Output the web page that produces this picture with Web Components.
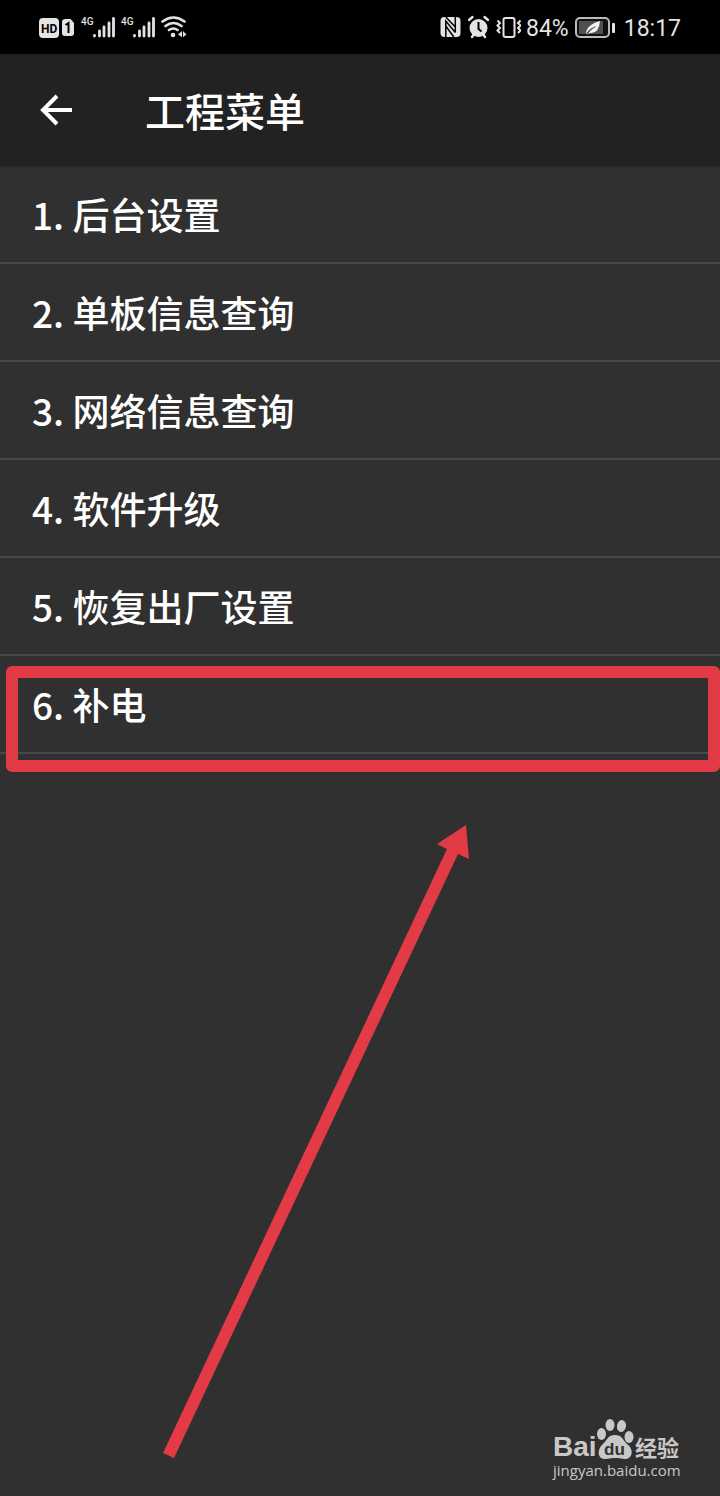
<!DOCTYPE html>
<html lang="zh-CN">
<head>
<meta charset="utf-8">
<meta name="viewport" content="width=device-width, initial-scale=1">
<title>工程菜单</title>
<style>
html, body { margin: 0; background: #303030; }
body { font-family: "Noto Sans CJK SC", sans-serif; color: #fff; }
</style>
</head>
<body>
<menu-screen>
  <status-bar slot="status"></status-bar>
  <title-bar slot="header">工程菜单</title-bar>
  <menu-row>1. 后台设置</menu-row>
  <menu-row>2. 单板信息查询</menu-row>
  <menu-row>3. 网络信息查询</menu-row>
  <menu-row>4. 软件升级</menu-row>
  <menu-row>5. 恢复出厂设置</menu-row>
  <menu-row marked>6. 补电</menu-row>
  <pointer-arrow slot="note"></pointer-arrow>
  <site-mark slot="footer"></site-mark>
</menu-screen>
<script>
function define(name, html) {
  customElements.define(name, class extends HTMLElement {
    constructor() {
      super();
      this.attachShadow({ mode: 'open' }).innerHTML = html;
    }
  });
}

define('menu-screen', `
<style>
:host { display: flex; flex-direction: column; min-height: 100vh; position: relative; overflow: hidden; }
main { flex: 1; }
nav { display: block; }
</style>
<slot name="status"></slot>
<slot name="header"></slot>
<main><nav><slot></slot></nav><slot name="note"></slot></main>
<slot name="footer"></slot>`);

define('status-bar', `
<style>
:host { display: flex; justify-content: space-between; align-items: center; height: 54px; padding: 0 39px 0 38px; background: #000; color: #e4e4e4; font: 23px/28px Roboto, sans-serif; }
div { display: flex; align-items: center; }
svg { display: block; fill: currentColor; }
span { padding-top: 3px; }
.power { gap: 5px; }
.time { margin-left: 3px; }
</style>
<div>
<svg width="150" height="28" viewBox="38 13 150 28" role="img" aria-label="HD 4G Wi-Fi">
  <rect x="39" y="18" width="20" height="20" rx="4"/>
  <text x="41" y="33" font-size="12" font-weight="700" fill="#000">HD</text>
  <path d="M65.500 19h5l3.500 4v10q0 3-3 3h-6q-3 0-3-3V22q0-3 3.500-3z"/>
  <path d="M65.500 25l3-2v10" fill="none" stroke="#000" stroke-width="2"/>
  <text x="81" y="25" font-size="10" font-weight="500">4G</text>
  <g stroke="currentColor" stroke-width="2.800" stroke-linecap="round">
    <path d="M94.500 35.500v.5M99.500 31v5M104 27v9M109 23v13M113.500 18.500v17.500"/>
  </g>
  <text x="121" y="25" font-size="10" font-weight="500">4G</text>
  <g stroke="currentColor" stroke-width="2.800" stroke-linecap="round">
    <path d="M134.500 35.500v.5M139.500 31v5M144 27v9M149 23v13M153.500 18.500v17.500"/>
  </g>
  <g fill="none" stroke="currentColor" stroke-width="2.600" stroke-linecap="round">
    <path d="M162.500 21.500q11-8 22 0M165.500 26q8-6 16 0M169 30q4.500-3 8.500 0"/>
  </g>
  <circle cx="173" cy="35" r="2.300"/>
  <path d="M178 34.500l4-3.500v6zM186.500 34.500l-3.500-3.500v6z"/>
</svg>
</div>
<div class="power">
<svg width="82" height="28" viewBox="438 13 82 28" role="img" aria-label="NFC">
  <rect x="439.500" y="17" width="20" height="20" rx="4"/>
  <path d="M444.800 37V21l9.500 11.500M454.300 17v15.500M444.800 17l9.500 10M444.800 26l8 11" fill="none" stroke="#000" stroke-width="1.500"/>
  <circle cx="477.500" cy="28" r="9"/>
  <path d="M468 20l3.500-3M487 20l-3.500-3M471 37l2-3M484 37l-2-3" stroke="currentColor" stroke-width="2.400" stroke-linecap="round"/>
  <path d="M477.500 22v7l3 2.500" fill="none" stroke="#000" stroke-width="2"/>
  <g fill="none" stroke="currentColor" stroke-width="2">
    <rect x="502.500" y="18" width="11" height="19" rx="2"/>
    <path d="M496.500 20.500l2.500 2.500-2.500 2.500 2.500 2.500-2.500 2.500 2.500 2.500M519.500 20.500l-2.500 2.500 2.500 2.500-2.500 2.500 2.500 2.500-2.500 2.500"/>
  </g>
</svg>
<span>84%</span>
<svg width="42" height="28" viewBox="574 13 42 28" role="img" aria-label="电池">
  <rect x="576" y="18" width="33" height="19" rx="4" fill="#111" stroke="#bbb" stroke-width="2"/>
  <rect x="579" y="21" width="24" height="13" fill="#505050"/>
  <path d="M586 34q0-9 14-13q-1 13-10 12l-3 1.500q4-6 8-8q-6 2-9 7.500z" fill="#f2f2f2"/>
  <path d="M586.500 35q4-6 9-8.500" stroke="#505050" fill="none"/>
  <rect x="612" y="23" width="3" height="10" rx="1"/>
</svg>
<span class="time">18:17</span>
</div>`);

define('title-bar', `
<style>
:host { display: flex; align-items: center; gap: 64px; height: 112px; padding: 0 33px; box-sizing: border-box; background: #222; box-shadow: 0 1px 3px #2229; }
button { width: 48px; height: 48px; padding: 0; border: 0; background: none; color: inherit; }
svg { display: block; }
h1 { margin: 0; font-size: 40px; line-height: 56px; font-weight: 500; }
</style>
<button type="button" aria-label="返回"><svg width="48" height="48" viewBox="0 0 48 48" fill="none" stroke="currentColor" stroke-width="4"><path d="M39 24H11M24 10L10 24l14 14"/></svg></button>
<h1><slot></slot></h1>`);

define('menu-row', `
<style>
:host { display: block; position: relative; border-bottom: 2px solid #484848; }
a { display: block; padding: 20px 32px; font-size: 37px; font-weight: 500; line-height: 56px; color: inherit; text-decoration: none; }
:host([marked])::after { content: ""; position: absolute; left: 6px; right: 0; top: 10px; bottom: -20px; border: 12px solid #e23b45; border-radius: 6px; box-sizing: border-box; }
</style>
<a href="#"><slot></slot></a>`);

define('pointer-arrow', `
<style>
:host { position: absolute; left: 160px; top: 820px; pointer-events: none; }
svg { display: block; }
</style>
<svg width="320" height="650" viewBox="160 820 320 650" fill="#e23b45" aria-hidden="true"><path d="M466 825L469 859L458 854L174 1458L163 1453L447 849L437 844Z"/></svg>`);

define('site-mark', `
<style>
:host { display: flex; flex-direction: column; align-items: flex-end; padding: 0 40px 16px 0; color: #c8c8c8; }
.logo { display: flex; align-items: flex-end; width: 127px; height: 42px; }
.bai { font: 700 28px/26px "Liberation Sans", sans-serif; width: 43px; }
.zh { font-size: 22px; line-height: 28px; font-weight: 700; }
svg { display: block; fill: currentColor; }
a { font: 15px/20px "Open Sans", sans-serif; color: inherit; text-decoration: none; width: 127px; white-space: nowrap; }
</style>
<div class="logo"><span class="bai">Bai</span>
<svg width="39" height="42" viewBox="596 1418 39 42" role="img" aria-label="du"><ellipse cx="601.500" cy="1434" rx="4.500" ry="6"/><ellipse cx="610" cy="1425" rx="4.500" ry="6"/><ellipse cx="621.500" cy="1426" rx="4.500" ry="6" transform="rotate(10 621 1426)"/><ellipse cx="629" cy="1437" rx="4.500" ry="6"/><path d="M615 1435c7 0 8 5 12 9c7 5 6 15-2 15c-3 0-5-1-10-1s-7 1-10 1c-8 0-8-10-2-15c4-4 5-9 12-9z"/><text x="604" y="1455" font-family="Liberation Sans" font-size="17" font-weight="700" fill="#303030">du</text></svg>
<span class="zh">经验</span></div>
<a href="#">jingyan.baidu.com</a>`);
</script>
</body>
</html>
